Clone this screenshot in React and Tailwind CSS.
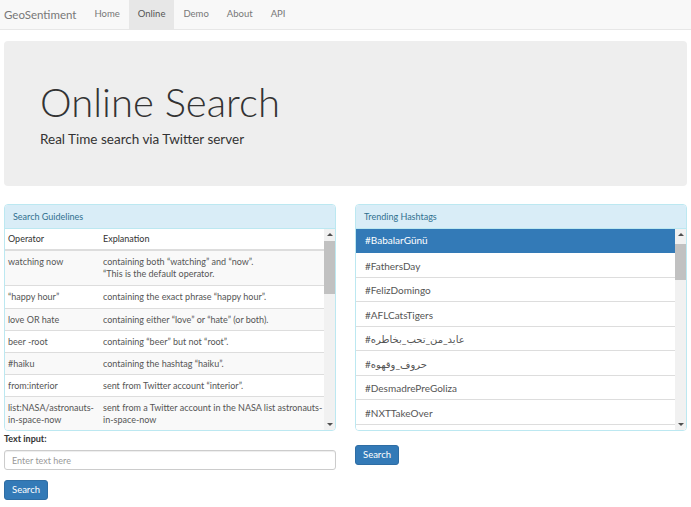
import React from "react";

const font = { fontFamily: "Lato, 'Open Sans', 'DejaVu Sans', sans-serif" };

const navItems = ["Home", "Online", "Demo", "About", "API"];

const rules = [
    { op: "watching now", ex: ["containing both \u201cwatching\u201d and \u201cnow\u201d.", "\u201cThis is the default operator."], h: "h-[35px]" },
    { op: "\u201chappy hour\u201d", ex: ["containing the exact phrase \u201chappy hour\u201d."], h: "h-[23px]" },
    { op: "love OR hate", ex: ["containing either \u201clove\u201d or \u201chate\u201d (or both)."], h: "h-[22px]" },
    { op: "beer -root", ex: ["containing \u201cbeer\u201d but not \u201croot\u201d."], h: "h-[22px]" },
    { op: "#haiku", ex: ["containing the hashtag \u201chaiku\u201d."], h: "h-[22px]" },
    { op: "from:interior", ex: ["sent from Twitter account \u201cinterior\u201d."], h: "h-[22px]" },
    { op: ["list:NASA/astronauts-", "in-space-now"], ex: ["sent from a Twitter account in the NASA list astronauts-", "in-space-now"], h: "h-[36px]" },
];

const hashtags = [
    "#BabalarGünü",
    "#FathersDay",
    "#FelizDomingo",
    "#AFLCatsTigers",
    "#عايد_من_تحب_بخاطره",
    "#حروف_وقهوه",
    "#DesmadrePreGoliza",
    "#NXTTakeOver",
];

const FakeScrollbar = ({ thumbTop, thumbHeight }) => (
    <div className="w-[11px] shrink-0 bg-[#f1f1f1] flex flex-col items-center justify-between relative">
        <div className="h-[11px] flex items-center justify-center">
            <div className="w-0 h-0 border-l-[3px] border-r-[3px] border-b-[3px] border-l-transparent border-r-transparent border-b-[#505050]" />
        </div>
        <div className="absolute left-0 w-[11px] bg-[#c1c1c1]" style={{ top: thumbTop, height: thumbHeight }} />
        <div className="h-[11px] flex items-center justify-center">
            <div className="w-0 h-0 border-l-[3px] border-r-[3px] border-t-[3px] border-l-transparent border-r-transparent border-t-[#505050]" />
        </div>
    </div>
);

const App = () => {
    return (
        <div className="w-[691px] min-h-[507px] bg-white text-[#333]" style={font}>
            {/* navbar */}
            <div className="h-[30px] bg-[#f8f8f8] border-b border-[#e7e7e7] flex items-stretch">
                <div className="pl-[4px] pr-[9px] flex items-center text-[11.5px] text-[#777]">{"GeoSentiment"}</div>
                {navItems.map((n) => (
                    <div
                        key={n}
                        className={
                            "px-[9px] flex items-center text-[9.5px] " +
                            (n === "Online" ? "bg-[#e7e7e7] text-[#555]" : "text-[#777]")
                        }
                    >
                        {n}
                    </div>
                ))}
            </div>

            <div className="px-[4px]">
                {/* jumbotron */}
                <div className="mt-[11px] h-[145px] bg-[#eeeeee] rounded-[4px] pl-[36px] pt-[39px]">
                    <h1 className="text-[40px] font-light leading-[1.1] text-[#333]">{"Online Search"}</h1>
                    <p className="mt-[5px] text-[13.5px] text-[#333]">{"Real Time search via Twitter server"}</p>
                </div>

                <div className="mt-[18px] grid grid-cols-2 gap-[19px]">
                    {/* left column */}
                    <div>
                        <div className="border border-[#bce8f1] rounded-[4px] overflow-hidden">
                            <div className="h-[24px] bg-[#d9edf7] text-[#31708f] text-[9px] pl-[8px] flex items-center border-b border-[#bce8f1]">
                                {"Search Guidelines"}
                            </div>
                            <div className="flex h-[201px]">
                                <div className="flex-1 overflow-hidden text-[9px]">
                                    <div className="h-[22px] flex items-center border-b-2 border-[#ddd] text-[#333]">
                                        <div className="w-[98px] pl-[3px]">{"Operator"}</div>
                                        <div>{"Explanation"}</div>
                                    </div>
                                    {rules.map((r, i) => (
                                        <div
                                            key={i}
                                            className={
                                                "flex items-start pt-[5px] border-b border-[#ddd] text-[#555] leading-[12px] " +
                                                r.h +
                                                (i % 2 === 0 ? " bg-[#f9f9f9]" : " bg-white")
                                            }
                                        >
                                            <div className="w-[98px] pl-[3px] shrink-0">
                                                {Array.isArray(r.op)
                                                    ? r.op.map((l) => <div key={l}>{l}</div>)
                                                    : r.op}
                                            </div>
                                            <div>
                                                {r.ex.map((l) => (
                                                    <div key={l}>{l}</div>
                                                ))}
                                            </div>
                                        </div>
                                    ))}
                                </div>
                                <FakeScrollbar thumbTop={12} thumbHeight={53} />
                            </div>
                        </div>
                        <div className="mt-[1px] text-[9px] font-bold text-[#333]">{"Text input:"}</div>
                        <input
                            className="-mt-[1px] w-full h-[20px] border border-[#ccc] rounded-[3px] px-[7px] text-[9px] placeholder:text-[#999] outline-none shadow-[inset_0_1px_1px_rgba(0,0,0,0.075)]"
                            placeholder="Enter text here"
                        />
                        <button className="mt-[10px] h-[20px] px-[7px] bg-[#337ab7] border border-[#2e6da4] rounded-[3px] text-white text-[9.5px]">
                            {"Search"}
                        </button>
                    </div>

                    {/* right column */}
                    <div>
                        <div className="border border-[#bce8f1] rounded-[4px] overflow-hidden">
                            <div className="h-[24px] bg-[#d9edf7] text-[#31708f] text-[9px] pl-[8px] flex items-center border-b border-[#bce8f1]">
                                {"Trending Hashtags"}
                            </div>
                            <div className="flex h-[201px] bg-white">
                                <div className="flex-1 overflow-hidden">
                                    {hashtags.map((t, i) => (
                                        <div
                                            key={t}
                                            className={
                                                "pl-[9px] flex items-center text-[10px] border-b " +
                                                (i === 0 ? "h-[24px] " : "h-[24.5px] pt-[3px] ") +
                                                (i === 0
                                                    ? "bg-[#337ab7] text-white border-[#337ab7]"
                                                    : "text-[#555] border-[#ddd]")
                                            }
                                        >
                                            {t}
                                        </div>
                                    ))}
                                    <div className="h-[10px] border-b border-[#ddd]" />
                                </div>
                                <FakeScrollbar thumbTop={15} thumbHeight={36} />
                            </div>
                        </div>
                        <button className="mt-[14px] h-[20px] px-[7px] bg-[#337ab7] border border-[#2e6da4] rounded-[3px] text-white text-[9.5px]">
                            {"Search"}
                        </button>
                    </div>
                </div>
            </div>
        </div>
    );
};

export default App;
